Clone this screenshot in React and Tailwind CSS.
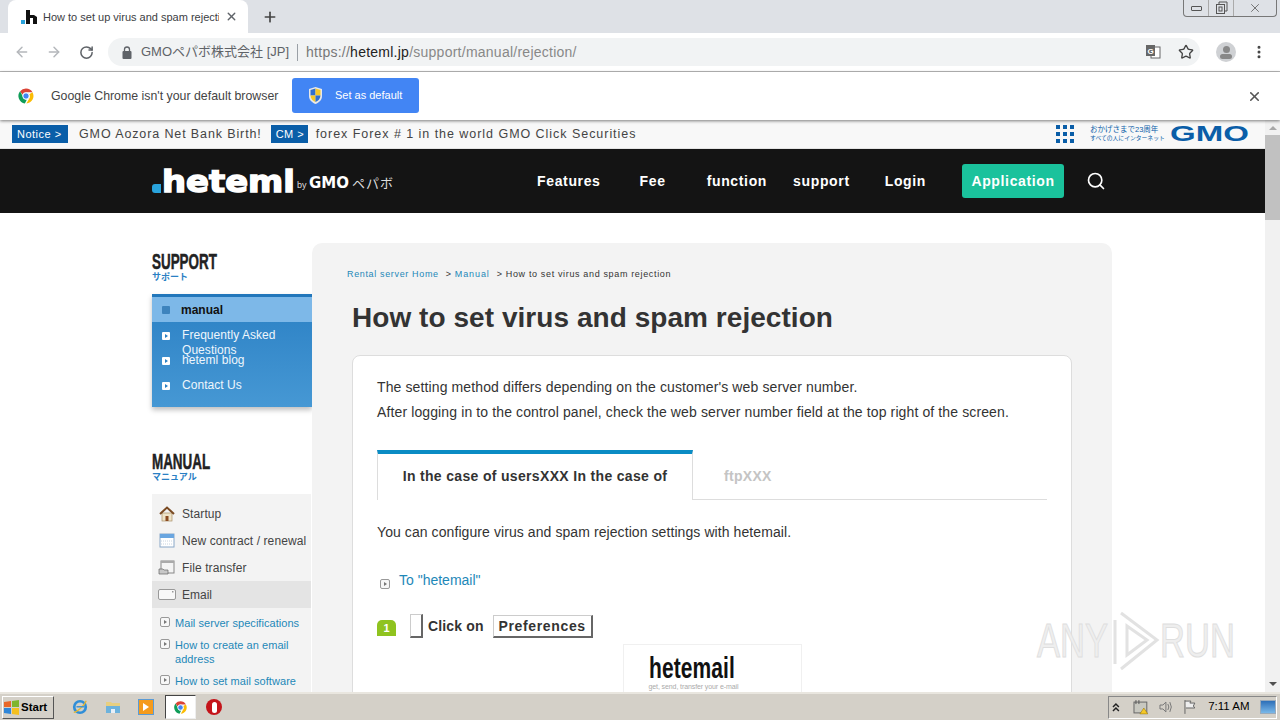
import React from "react";
import { ArrowLeft, ArrowRight, RotateCw, X, Plus, Star, MoreVertical, Search } from "lucide-react";

const sans = "font-['Liberation_Sans',Arial,'Noto_Sans_CJK_JP',sans-serif]";

function ChromeIcon({ size = 18 }) {
  return (
    <svg width={size} height={size} viewBox="0 0 48 48" className="shrink-0">
      <path d="M24 4a20 20 0 0 1 17.3 10H24a10 10 0 0 0-9.4 6.6L8.2 11.5A20 20 0 0 1 24 4z" fill="#db4437" />
      <path d="M41.3 14A20 20 0 0 1 25 44l8.6-15A10 10 0 0 0 32.6 19z" fill="#fbbc05" />
      <path d="M8.2 11.5 15 24a10 10 0 0 0 11 9.8L21 43.8A20 20 0 0 1 8.2 11.5z" fill="#0f9d58" />
      <circle cx="24" cy="24" r="8.5" fill="#4285f4" stroke="#fff" strokeWidth="2.5" />
    </svg>
  );
}

function LogoFavicon() {
  return (
    <svg width="16" height="14" viewBox="0 0 16 14" className="shrink-0">
      <rect x="0" y="10" width="4" height="4" fill="#29a3dc" />
      <path d="M5 0h4v5h4l3 2v7h-4V8H9v6H5z" fill="#111" />
    </svg>
  );
}

function Shield() {
  return (
    <svg width="15" height="17" viewBox="0 0 15 17" className="shrink-0">
      <path d="M7.500 0 14 2v7c0 4-3 6.500-6.500 8C4 15.500 1 13 1 9V2z" fill="#e8e8e8" />
      <path d="M7.500 1.500V8.500H2.500V3z" fill="#2f6fd0" />
      <path d="M7.500 1.500 12.500 3v5.500h-5z" fill="#f5c827" />
      <path d="M2.500 8.500h5v6.500C5 14 2.700 12 2.500 8.500z" fill="#f5c827" />
      <path d="M7.500 8.500h5c-.2 3.500-2.500 5.500-5 6.500z" fill="#2f6fd0" />
    </svg>
  );
}

function SquareArrow({ tone = "white" }) {
  if (tone === "white") {
    return (
      <span className="w-[8px] h-[8px] bg-white rounded-[1px] flex items-center justify-center shrink-0">
        <span className="w-0 h-0 border-y-[2px] border-y-transparent border-l-[3px] border-l-[#2a80c4]" />
      </span>
    );
  }
  if (tone === "active") {
    return <span className="w-[8px] h-[8px] bg-[#3d83bd] rounded-[1px] shrink-0" />;
  }
  return (
    <span className="w-[10px] h-[10px] bg-[#f7f7f7] border border-[#999] rounded-[2px] flex items-center justify-center shrink-0">
      <span className="w-0 h-0 border-y-[2px] border-y-transparent border-l-[3px] border-l-[#777]" />
    </span>
  );
}

function Heading({ en, ja }) {
  return (
    <div className="flex flex-col">
      <div className="h-[21px] text-[22px] leading-[22px] font-bold text-[#222] whitespace-nowrap">
        <span className="inline-block origin-left scale-x-[0.61] [-webkit-text-stroke:0.5px_#222]">{en}</span>
      </div>
      <div className="text-[9px] leading-[10px] font-bold text-[#2a80c4]">{ja}</div>
    </div>
  );
}

function NavItem({ children, className = "" }) {
  return <span className={"text-[14px] font-bold tracking-[0.65px] text-white " + className}>{children}</span>;
}

function HomeIcon() {
  return (
    <svg width="16" height="16" viewBox="0 0 16 16">
      <rect x="3" y="7" width="10" height="8" fill="#efe3c8" stroke="#a98f68" strokeWidth="0.7" />
      <path d="M1 8 8 1.500 15 8" fill="none" stroke="#7a4a22" strokeWidth="2" />
      <rect x="6.500" y="10" width="3" height="5" fill="#8a4a20" />
    </svg>
  );
}
function CalIcon() {
  return (
    <svg width="16" height="15" viewBox="0 0 16 15">
      <rect x="1" y="1" width="14" height="13" fill="#fff" stroke="#8aa8c8" />
      <rect x="1" y="1" width="14" height="4" fill="#6aa6e0" />
      <path d="M2 8h12M2 11h12" stroke="#c8d4e0" strokeDasharray="1 1" />
    </svg>
  );
}
function FileIcon() {
  return (
    <svg width="17" height="15" viewBox="0 0 17 15">
      <rect x="3" y="1" width="13" height="12" fill="#f4f4f4" stroke="#888" />
      <rect x="3" y="1" width="13" height="2" fill="#aaa" />
      <path d="M1 9h4l1 1h4v4H1z" fill="#c8c8c8" stroke="#666" strokeWidth="0.7" />
    </svg>
  );
}
function MailIcon() {
  return (
    <svg width="18" height="13" viewBox="0 0 18 13">
      <rect x="0.500" y="1.500" width="17" height="10" rx="1.500" fill="#f8f8f8" stroke="#999" />
      <rect x="14" y="3" width="1.500" height="1.500" fill="#999" />
    </svg>
  );
}

function Sidebar() {
  return (
    <aside className="w-[160px] shrink-0 pt-[8px]">
      <Heading en="SUPPORT" ja="サポート" />
      <div className="mt-[12px] h-[113px] border-t-[3px] border-[#2277bb] bg-gradient-to-b from-[#2a80c4] to-[#4698d4] shadow-[0_3px_5px_rgba(0,0,0,0.25)]">
        <div className="h-[25px] bg-[#7db8e8] flex items-center pl-[10px] gap-[11px]">
          <SquareArrow tone="active" />
          <span className="text-[12px] font-bold text-[#111]">manual</span>
        </div>
        <div className="pt-[6px] text-[12px] leading-[15px] text-[#eef6fc] tracking-[0.05px]">
          <div className="h-[25px] flex items-start pl-[10px] gap-[12px]">
            <span className="mt-[4px]"><SquareArrow /></span>
            <span className="w-[110px]">Frequently Asked Questions</span>
          </div>
          <div className="h-[25px] flex items-start pl-[10px] gap-[12px]">
            <span className="mt-[4px]"><SquareArrow /></span>
            <span>heteml blog</span>
          </div>
          <div className="h-[25px] flex items-start pl-[10px] gap-[12px]">
            <span className="mt-[4px]"><SquareArrow /></span>
            <span>Contact Us</span>
          </div>
        </div>
      </div>
      <div className="mt-[44px]">
        <Heading en="MANUAL" ja="マニュアル" />
      </div>
      <div className="mt-[12px] w-[159px] bg-[#f3f3f3] pt-[6px] pb-[10px] text-[12px] text-[#444]">
        {[
          ["Startup", <HomeIcon key="h" />],
          ["New contract / renewal", <CalIcon key="c" />],
          ["File transfer", <FileIcon key="m" />],
        ].map(([t, icon]) => (
          <div key={t} className="h-[27px] flex items-center pl-[6px] gap-[7px]">
            <span className="w-[17px] flex justify-center">{icon}</span>
            <span className="whitespace-nowrap tracking-[0.1px]">{t}</span>
          </div>
        ))}
        <div className="h-[27px] flex items-center pl-[6px] gap-[6px] bg-[#e4e4e4]">
          <span className="w-[18px] flex justify-center"><MailIcon /></span>
          <span>Email</span>
        </div>
        <div className="pt-[8px] pl-[8px] text-[11px] leading-[14px] text-[#1e88b8] tracking-[0.05px]">
          <div className="flex gap-[5px] h-[22px]">
            <span className="mt-[1px]"><SquareArrow tone="outline" /></span>
            <span className="whitespace-nowrap">Mail server specifications</span>
          </div>
          <div className="flex gap-[5px] h-[36px]">
            <span className="mt-[1px]"><SquareArrow tone="outline" /></span>
            <span>How to create an email address</span>
          </div>
          <div className="flex gap-[5px] h-[22px]">
            <span className="mt-[1px]"><SquareArrow tone="outline" /></span>
            <span className="whitespace-nowrap">How to set mail software</span>
          </div>
        </div>
      </div>
    </aside>
  );
}

function Article() {
  return (
    <main className="w-[800px] shrink-0 bg-[#f3f3f3] rounded-t-[10px] pt-[25px] pl-[35px] pr-[40px]">
      <div className="text-[9px] leading-[12px] tracking-[0.65px] flex gap-[7px] text-[#333]">
        <span className="text-[#1e88b8]">Rental server Home</span>
        <span>&gt; <span className="text-[#1e88b8] tracking-[0.9px]">Manual</span></span>
        <span>&gt; How to set virus and spam rejection</span>
      </div>
      <h1 className="ml-[5px] mt-[20px] text-[28px] leading-[36px] font-bold text-[#333] tracking-[0.05px] whitespace-nowrap">How to set virus and spam rejection</h1>
      <div className="ml-[5px] mt-[19px] bg-white border border-[#ddd] rounded-t-[8px] px-[24px] pt-[19px] h-[400px] text-[14px] leading-[25px] text-[#333] tracking-[0.12px]">
        <p>The setting method differs depending on the customer's web server number.</p>
        <p>After logging in to the control panel, check the web server number field at the top right of the screen.</p>
        <div className="mt-[25px] flex h-[50px] w-[670px] border-b border-[#ddd]">
          <div className="w-[316px] h-[50px] -mb-px pb-[1px] bg-white border-t-[4px] border-t-[#0a8cc4] border-x border-x-[#ddd] flex items-center justify-center text-[14px] font-bold tracking-[0.33px] text-[#333]">
            In the case of usersXXX In the case of
          </div>
          <div className="pl-[31px] pt-[3px] flex items-center text-[14px] font-bold tracking-[0.3px] text-[#c4c4c4]">ftpXXX</div>
        </div>
        <p className="mt-[20px] tracking-[0.08px]">You can configure virus and spam rejection settings with hetemail.</p>
        <div className="mt-[23px] flex items-center gap-[9px] h-[25px] text-[#1e88b8] tracking-[0px]">
          <span className="mt-[6px] ml-[3px]"><SquareArrow tone="outline" /></span>
          <span>To "hetemail"</span>
        </div>
        <div className="mt-[21px] flex items-center h-[24px] font-bold">
          <span className="w-[19px] h-[16px] mt-[4px] rounded-t-[5px] bg-[#8fc31f] text-white text-[11px] leading-[16px] text-center">1</span>
          <span className="ml-[14px] w-[13px] h-[24px] bg-white border border-[#ccc] border-r-2 border-b-2 border-r-[#666] border-b-[#666]" />
          <span className="ml-[5px] tracking-[0.15px]">Click on</span>
          <span className="ml-[9px] h-[23px] w-[100px] pt-[1px] flex items-center justify-center tracking-[0.65px] border border-[#ccc] border-r-2 border-b-2 border-r-[#666] border-b-[#666]">Preferences</span>
        </div>
        <div className="mt-[6px] mx-auto w-[179px] h-[60px] border border-[#f0f0f0] pt-[9px] pl-[25px]">
          <div className="font-bold text-[30px] leading-[27px] text-[#111] whitespace-nowrap">
            <span className="inline-block origin-left scale-x-[0.7]">hetemail</span>
          </div>
          <div className="mt-[2px] text-[7px] leading-[8px] text-[#aaa] tracking-[-0.1px]">get, send, transfer your e-mail</div>
        </div>
      </div>
    </main>
  );
}

function Watermark() {
  return (
    <div className="absolute left-[1037px] top-[610px] flex items-center h-[62px] text-[48px] leading-[48px] text-[#eeeeee] [-webkit-text-stroke:1px_#dedede] pointer-events-none">
      <span className="w-[75px] whitespace-nowrap"><span className="inline-block origin-left scale-x-[0.72]">ANY</span></span>
      <svg width="50" height="62" viewBox="0 0 50 62" fill="none" stroke="#e2e2e2" strokeWidth="3">
        <path d="M3 10v44M9 3l36 27L9 59M15 16l20 14-20 15z" />
      </svg>
      <span className="ml-[-2px] w-[74px] whitespace-nowrap"><span className="inline-block origin-left scale-x-[0.72]">RUN</span></span>
    </div>
  );
}

function Taskbar() {
  return (
    <footer className="h-[28px] shrink-0 bg-[#d4d0c8] border-t-2 border-t-[#e9e6df] flex items-center">
      <div className="ml-[2px] w-[52px] h-[23px] border border-[#fff] border-r-[#555] border-b-[#555] flex items-center gap-[1px]">
        <svg width="17" height="15" viewBox="0 0 17 15">
          <path d="M1 2l7-1v6H1z" fill="#e8682a" /><path d="M9 1l7-1v7H9z" fill="#7fb52c" />
          <path d="M1 8h7v6l-7-1z" fill="#2f86d8" /><path d="M9 8h7v7l-7-1z" fill="#f4c020" />
        </svg>
        <span className="pt-[1px] text-[11.500px] font-bold text-black">Start</span>
      </div>
      <div className="ml-[18px] w-[16px] flex justify-center">
        <svg width="18" height="18" viewBox="0 0 18 18"><circle cx="9" cy="9" r="6.500" fill="none" stroke="#2f8ed8" strokeWidth="3" /><path d="M2 15C5 15 14 8 16 2" stroke="#e8b830" strokeWidth="1.500" fill="none" /><rect x="5" y="8" width="9" height="1.500" fill="#2f8ed8" /></svg>
      </div>
      <div className="ml-[17px] w-[16px]">
        <svg width="16" height="16" viewBox="0 0 16 16"><path d="M1 3h5l1 1h8v10H1z" fill="#e8cf80" /><rect x="1" y="7" width="14" height="7" fill="#6db2dc" /><rect x="6" y="10" width="4" height="4" fill="#e8f0f8" /></svg>
      </div>
      <div className="ml-[17px] w-[16px] h-[16px] bg-[#f59b1d] border border-[#5b9bd5] flex items-center justify-center">
        <span className="w-0 h-0 border-y-[4px] border-y-transparent border-l-[6px] border-l-white" />
      </div>
      <div className="ml-[11px] w-[31px] h-[24px] bg-white border border-[#eee] border-l-[#444] border-t-[#444] flex items-center justify-center">
        <ChromeIcon size={15} />
      </div>
      <div className="ml-[10px] w-[16px] h-[16px] rounded-full bg-[#c4141a] flex items-center justify-center">
        <span className="w-[5px] h-[11px] rounded-full bg-white" />
      </div>
      <div className="ml-auto mr-[3px] w-[169px] h-[23px] border border-[#888] border-r-[#fff] border-b-[#fff] flex items-center text-[12px] text-black whitespace-nowrap">
        <svg width="10" height="10" viewBox="0 0 10 10" fill="none" stroke="#222" strokeWidth="1.500" className="ml-[2px]"><path d="M2 5l3-3 3 3M2 9l3-3 3 3" /></svg>
        <svg width="16" height="16" viewBox="0 0 16 16" className="ml-[12px]"><rect x="1" y="3" width="13" height="11" fill="#c8c8c0" stroke="#666" /><path d="M3 1v4M6 1v4" stroke="#555" /><path d="M11 9l4 6H7z" fill="#f5c827" stroke="#8a6d00" strokeWidth="0.500" /></svg>
        <svg width="16" height="16" viewBox="0 0 16 16" fill="none" stroke="#777" className="ml-[9px]"><path d="M2 6h3l3-3v10l-3-3H2zM10 5q2 3 0 6M12 3q3 5 0 10" /></svg>
        <svg width="16" height="16" viewBox="0 0 16 16" fill="none" stroke="#666" className="ml-[9px]"><path d="M3 1v14M3 2h6l-1 2h5l-1.500 3 1.500 2H4" fill="#eee" /></svg>
        <span className="ml-[10px] w-[41px] text-[11.500px]">7:11 AM</span>
        <span className="ml-[11px] w-[16px] h-[14px] bg-gradient-to-b from-[#2c6fb8] to-[#7ab8e8] border border-[#9ab]" />
      </div>
    </footer>
  );
}

export default function App() {
  return (
    <div className={"relative w-[1280px] h-[720px] overflow-hidden flex flex-col bg-white " + sans}>
      {/* tab strip */}
      <div className="h-[33px] shrink-0 bg-[#dee1e6] flex items-end pl-[8px] relative">
        <div className="w-[240px] h-[33px] bg-white rounded-t-[8px] flex items-center pl-[13px] pr-[10px] gap-[6px]">
          <LogoFavicon />
          <span className="flex-1 pt-[1px] overflow-hidden whitespace-nowrap text-[11px] text-[#3c4043]">How to set up virus and spam rejection</span>
          <X size={13} className="text-[#5f6368]" strokeWidth={2.500} />
        </div>
        <Plus size={16} className="ml-[14px] mb-[8px] text-[#444]" strokeWidth={2.500} />
        <div className="absolute right-[3px] top-0 w-[94px] h-[17px] bg-[#dee1e6] border border-t-0 border-[#777] rounded-b-[4px] flex items-center">
          <span className="w-[25px] flex justify-center border-r border-[#aaa] h-full items-center"><span className="w-[11px] h-[5px] border border-[#555] rounded-[1px]" /></span>
          <span className="w-[25px] flex justify-center border-r border-[#aaa] h-full items-center">
            <svg width="13" height="14" viewBox="0 0 13 14" fill="none" stroke="#555"><path d="M4 3V1h8v9h-2" /><rect x="1.500" y="3.500" width="8" height="9" /><rect x="4" y="6" width="3" height="4" /></svg>
          </span>
          <span className="flex-1 flex justify-center"><X size={14} className="text-[#666]" strokeWidth={1.500} /></span>
        </div>
      </div>
      {/* toolbar */}
      <div className="h-[39px] shrink-0 bg-white border-b border-[#bbb] flex items-center pl-[14px]">
        <ArrowLeft size={16} className="text-[#b4b7bb]" strokeWidth={2.200} />
        <ArrowRight size={16} className="ml-[16px] text-[#b4b7bb]" strokeWidth={2.200} />
        <RotateCw size={15} className="ml-[17px] text-[#5f6368]" strokeWidth={2.400} />
        <div className="ml-[14px] w-[1092px] h-[28px] rounded-full bg-[#f1f3f4] flex items-center pl-[13px] text-[14px] whitespace-nowrap">
          <svg width="10" height="13" viewBox="0 0 10 13" className="ml-[1px] shrink-0"><rect x="0.500" y="5" width="9" height="8" rx="1" fill="#5f6368" /><path d="M2.500 5V3.500a2.500 2.500 0 0 1 5 0V5" fill="none" stroke="#5f6368" strokeWidth="1.300" /></svg>
          <span className="ml-[9px] text-[#5f6368] text-[13px]">GMOペパボ株式会社 [JP]</span>
          <span className="mx-[8px] w-px h-[17px] bg-[#9aa0a6]" />
          <span className="text-[#777] tracking-[0.25px]">https://</span>
          <span className="text-[#222] tracking-[0.25px]">heteml.jp</span>
          <span className="text-[#888] tracking-[0.25px]">/support/manual/rejection/</span>
          <span className="ml-auto mr-[6px] flex items-center gap-[17px]">
            <svg width="16" height="16" viewBox="0 0 16 16">
              <rect x="6" y="3" width="9" height="11" fill="#fff" stroke="#666" />
              <rect x="1" y="1" width="9" height="11" fill="#666" />
              <text x="5.500" y="9.500" fontSize="8" fontWeight="bold" fill="#fff" textAnchor="middle">G</text>
            </svg>
            <Star size={16} className="text-[#444]" />
          </span>
        </div>
        <div className="ml-[16px] w-[20px] h-[20px] rounded-full bg-[#cfd1d4] flex flex-col items-center justify-center">
          <span className="w-[7px] h-[7px] rounded-full bg-[#888]" />
          <span className="mt-[1px] w-[12px] h-[5px] rounded-full bg-[#888]" />
        </div>
        <MoreVertical size={16} className="ml-[15px] text-[#444]" strokeWidth={2.500} />
      </div>
      {/* infobar */}
      <div className="h-[48px] shrink-0 bg-white flex items-center pl-[17px] pr-[18px] shadow-[0_1px_3px_rgba(0,0,0,0.5)] relative z-10">
        <ChromeIcon />
        <span className="ml-[16px] w-[228px] whitespace-nowrap text-[12.350px] text-[#444]">Google Chrome isn't your default browser</span>
        <div className="ml-[13px] mb-[2px] w-[127px] h-[35px] bg-[#4285f4] rounded-[3px] flex items-center pl-[16px] gap-[12px]">
          <Shield />
          <span className="text-[11px] text-white">Set as default</span>
        </div>
        <X size={15} className="ml-auto text-[#555]" strokeWidth={2.500} />
      </div>
      {/* page */}
      <div className="flex-1 min-h-0 flex">
        <div className="w-[1265px] shrink-0 overflow-hidden">
          <div className="h-[29px] bg-[#f8f8f8] border-b border-[#e4e4e4] flex items-center pl-[12px] text-[12.500px] text-[#444] tracking-[0.88px] whitespace-nowrap">
            <span className="w-[56px] h-[18px] bg-[#0a5ea8] text-white text-[11px] font-normal tracking-[0.5px] leading-[18px] pl-[5px]">Notice &gt;</span>
            <span className="ml-[11px]">GMO Aozora Net Bank Birth!</span>
            <span className="ml-[9px] w-[37px] h-[18px] bg-[#0a5ea8] text-white text-[11px] tracking-[0.5px] leading-[18px] pl-[5px]">CM &gt;</span>
            <span className="ml-[8px] tracking-[0.96px]">forex Forex # 1 in the world GMO Click Securities</span>
            <span className="ml-auto mr-[17px] flex items-center">
              <span className="grid grid-cols-3 gap-[3px] mr-[16px]">
                {[0,1,2,3,4,5,6,7,8].map((i) => <span key={i} className="w-[4px] h-[4px] bg-[#0a5ea8]" />)}
              </span>
              <span className="w-[80px] text-[#0a5ea8] tracking-[0px] leading-[9px]">
                <span className="block text-[7.500px]">おかげさまで23周年</span>
                <span className="block text-[5.800px]">すべての人にインターネット</span>
              </span>
              <span className="w-[78px] text-[22px] leading-[22px] font-bold tracking-[0px] text-[#0a5ea8]">
                <span className="inline-block origin-left scale-x-[1.5]">GMO</span>
              </span>
            </span>
          </div>
          <header className="h-[64px] bg-[#141414] flex items-center">
            <div className="ml-[152px] w-[250px] flex items-end h-[30px] whitespace-nowrap">
              <span className="w-[9px] h-[9px] mb-[3px] bg-[#29a3dc] rounded-l-[3px]" />
              <span className="ml-[1px] w-[135px] text-[31px] leading-[30px] font-bold text-white [-webkit-text-stroke:1.5px_white] font-['DejaVu_Sans',sans-serif]">
                <span className="inline-block origin-left scale-x-[1.09]">heteml</span>
              </span>
              <span className="mb-[2px] text-[#ddd] text-[9px]">by <b className="text-[15px] font-['DejaVu_Sans',sans-serif] text-white">GMO</b><span className="text-[13px] ml-[3px] tracking-[1px]">ペパボ</span></span>
            </div>
            <NavItem className="ml-[135px]">Features</NavItem>
            <NavItem className="ml-[39px]">Fee</NavItem>
            <NavItem className="ml-[41px]">function</NavItem>
            <NavItem className="ml-[26px]">support</NavItem>
            <NavItem className="ml-[35px]">Login</NavItem>
            <div className="ml-[36px] w-[102px] h-[34px] bg-[#1ac29c] rounded-[3px] flex items-center justify-center">
              <NavItem>Application</NavItem>
            </div>
            <Search size={20} className="ml-[22px] text-white" strokeWidth={2} />
          </header>
          <div className="flex pl-[152px] pt-[30px]">
            <Sidebar />
            <Article />
          </div>
        </div>
        <div className="w-[15px] shrink-0 bg-[#f1f1f1] flex flex-col items-center pt-[6px] pb-[6px]">
          <span className="w-0 h-0 border-x-[4px] border-x-transparent border-b-[4px] border-b-[#a8a8a8]" />
          <div className="mt-[5px] w-[15px] h-[85px] bg-[#c1c1c1]" />
          <span className="mt-auto w-0 h-0 border-x-[4px] border-x-transparent border-t-[4px] border-t-[#505050]" />
        </div>
      </div>
      <Taskbar />
      <Watermark />
    </div>
  );
}
